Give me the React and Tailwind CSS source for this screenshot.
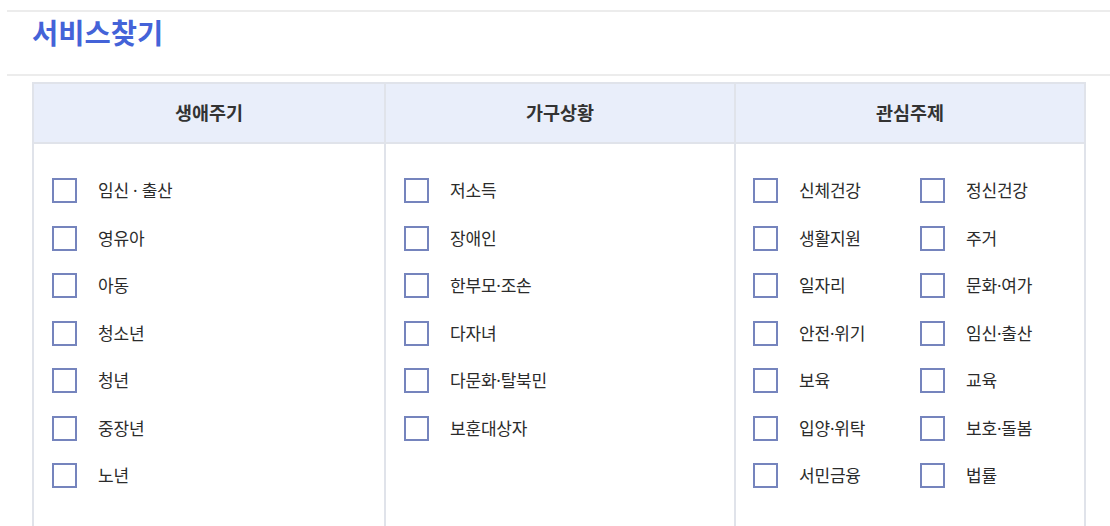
import React from "react";

const font = { fontFamily: '"Noto Sans", "Noto Sans CJK KR", sans-serif' };

const col1 = ["임신 · 출산", "영유아", "아동", "청소년", "청년", "중장년", "노년"];
const col2 = ["저소득", "장애인", "한부모·조손", "다자녀", "다문화·탈북민", "보훈대상자"];
const col3a = ["신체건강", "생활지원", "일자리", "안전·위기", "보육", "입양·위탁", "서민금융"];
const col3b = ["정신건강", "주거", "문화·여가", "임신·출산", "교육", "보호·돌봄", "법률"];

function Item({ label }) {
  return (
    <label className="flex h-[47.5px] items-start">
      <span className="box-border block h-[25px] w-[25px] shrink-0 border-2 border-[#7584bd] bg-white" />
      <span className="ml-[21px] text-[17px] leading-[25px] tracking-[-0.2px] text-[#2b2b2b]">{label}</span>
    </label>
  );
}

function List({ items }) {
  return (
    <div className="flex flex-col">
      {items.map((t) => (
        <Item key={t} label={t} />
      ))}
    </div>
  );
}

export default function App() {
  return (
    <div className="h-[526px] w-[1110px] overflow-hidden bg-white pt-[10px] pl-[7px]" style={font}>
      <div className="h-[66px] border-t-2 border-b-2 border-[#ececec]">
        <h1 className="ml-[25px] mt-[2px] text-[28.5px] font-bold leading-[38px] text-[#4463d8]">서비스찾기</h1>
      </div>
      <div className="ml-[25px] mt-[6px] w-[1054px] border-2 border-b-0 border-[#e0e3ea]">
        <div className="grid h-[60px] grid-cols-3 border-b-2 border-[#e0e3ea] bg-[#e9eefa]">
          <div className="flex items-center justify-center text-[18.5px] font-bold text-[#333]">생애주기</div>
          <div className="flex items-center justify-center border-l-2 border-[#e0e3ea] text-[18.5px] font-bold text-[#333]">가구상황</div>
          <div className="flex items-center justify-center border-l-2 border-[#e0e3ea] text-[18.5px] font-bold text-[#333]">관심주제</div>
        </div>
        <div className="grid h-[400px] grid-cols-3">
          <div className="pl-[18px] pt-[34px]">
            <List items={col1} />
          </div>
          <div className="border-l-2 border-[#e0e3ea] pl-[18px] pt-[34px]">
            <List items={col2} />
          </div>
          <div className="flex border-l-2 border-[#e0e3ea] pl-[17px] pt-[34px]">
            <div className="w-[167px]">
              <List items={col3a} />
            </div>
            <List items={col3b} />
          </div>
        </div>
      </div>
    </div>
  );
}
